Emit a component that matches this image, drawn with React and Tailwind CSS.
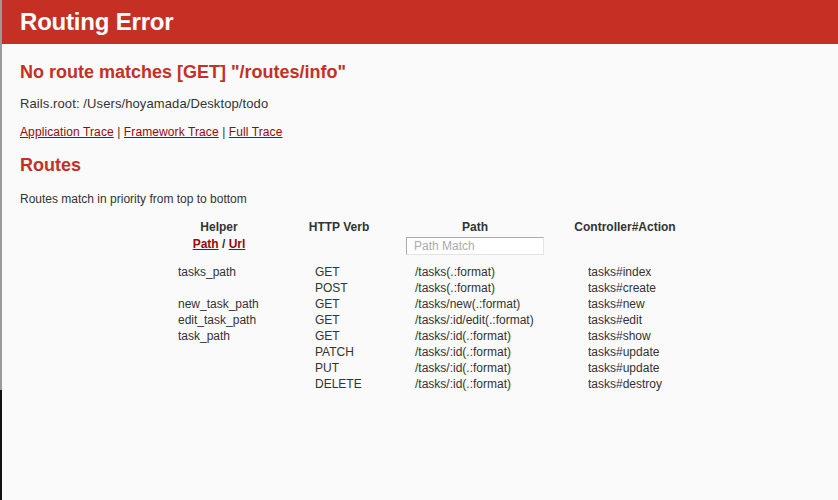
import React from "react";

const rows = [
  ["tasks_path", "GET", "/tasks(.:format)", "tasks#index"],
  ["", "POST", "/tasks(.:format)", "tasks#create"],
  ["new_task_path", "GET", "/tasks/new(.:format)", "tasks#new"],
  ["edit_task_path", "GET", "/tasks/:id/edit(.:format)", "tasks#edit"],
  ["task_path", "GET", "/tasks/:id(.:format)", "tasks#show"],
  ["", "PATCH", "/tasks/:id(.:format)", "tasks#update"],
  ["", "PUT", "/tasks/:id(.:format)", "tasks#update"],
  ["", "DELETE", "/tasks/:id(.:format)", "tasks#destroy"],
];

export default function App() {
  return (
    <div
      className="flex w-[838px] h-[500px] overflow-hidden bg-[#fafafa] text-[#333]"
      style={{ fontFamily: '"Liberation Sans", Arial, sans-serif' }}
    >
      <div className="flex flex-col w-[2px] shrink-0">
        <div className="h-[390px] bg-[#9a9a9a]"></div>
        <div className="flex-1 bg-[#111]"></div>
      </div>
      <div className="flex-1 flex flex-col">
        <div className="h-[44px] bg-[#c52f24] flex items-center px-[18px]">
          <h1 className="text-[24px] font-bold text-white leading-none tracking-[-0.2px]">
            Routing Error
          </h1>
        </div>
        <div className="px-[18px]">
          <h2 className="mt-[16px] h-[24px] leading-[24px] text-[18px] font-bold text-[#c52f24]">
            No route matches [GET] "/routes/info"
          </h2>
          <p className="mt-[11px] h-[18px] leading-[18px] text-[13px] tracking-[0.1px]">
            Rails.root: /Users/hoyamada/Desktop/todo
          </p>
          <p className="mt-[10px] h-[18px] leading-[18px] text-[12px] tracking-[0.1px]">
            <a className="text-[#980905] underline">Application Trace</a> |{" "}
            <a className="text-[#980905] underline">Framework Trace</a> |{" "}
            <a className="text-[#980905] underline">Full Trace</a>
          </p>
          <h2 className="mt-[12px] h-[24px] leading-[24px] text-[18px] font-bold text-[#c52f24]">
            Routes
          </h2>
          <p className="mt-[14px] h-[16px] leading-[16px] text-[12px]">
            Routes match in priority from top to bottom
          </p>

          <div className="mt-[12px] flex text-[12px] leading-[16px]">
            <div className="ml-[154px] w-[90px] flex flex-col items-center">
              <div className="font-bold">Helper</div>
              <div className="mt-[1px] font-bold">
                <a className="text-[#980905] underline">Path</a> /{" "}
                <a className="text-[#980905] underline">Url</a>
              </div>
            </div>
            <div className="ml-[42px] w-[66px] flex flex-col items-center">
              <div className="font-bold">HTTP Verb</div>
            </div>
            <div className="ml-[34px] w-[138px] flex flex-col items-center">
              <div className="font-bold">Path</div>
              <div className="mt-[2px] w-[138px] h-[18px] bg-white border border-t-[#aaa] border-l-[#aaa] border-r-[#e4e4e4] border-b-[#e4e4e4] text-[#aaa] text-[12px] leading-[16px] pl-[7px]">
                Path Match
              </div>
            </div>
            <div className="ml-[31px] w-[100px] flex flex-col items-center">
              <div className="font-bold">Controller#Action</div>
            </div>
          </div>

          <div className="mt-[9px] flex flex-col text-[12px] leading-[16px]">
            {rows.map((r, i) => (
              <div key={i} className="flex h-[16px]">
                <div className="ml-[158px] w-[137px]">{r[0]}</div>
                <div className="w-[100px]">{r[1]}</div>
                <div className="w-[173px]">{r[2]}</div>
                <div>{r[3]}</div>
              </div>
            ))}
          </div>
        </div>
      </div>
    </div>
  );
}
